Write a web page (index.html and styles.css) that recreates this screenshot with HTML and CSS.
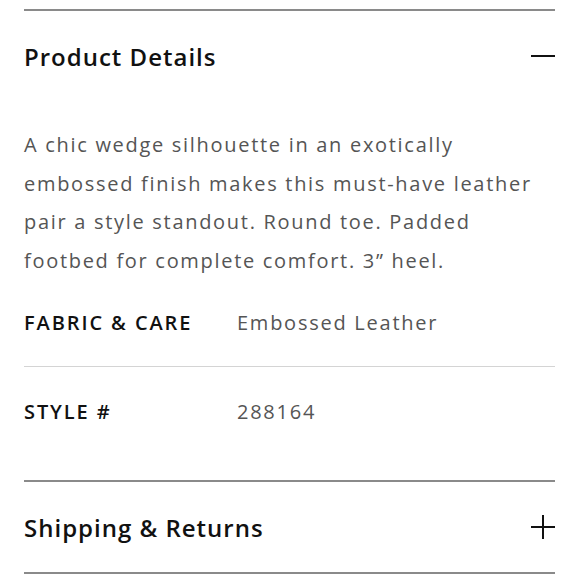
FILE: index.html
```html
<!DOCTYPE html>
<html>
<head>
<meta charset="utf-8">
<link rel="stylesheet" href="styles.css">
</head>
<body>
<div class="accordion">
  <section class="panel open">
    <div class="panel-head">
      <h2 class="panel-title">Product Details</h2>
      <svg class="icon" width="24" height="24" viewBox="0 0 24 24"><rect x="0" y="11" width="24" height="2" fill="#111"/></svg>
    </div>
    <div class="panel-body">
      <p class="desc">A chic wedge silhouette in an exotically embossed finish makes this must-have leather pair a style standout. Round toe. Padded footbed for complete comfort. 3” heel.</p>
      <div class="spec">
        <div class="spec-label">FABRIC &amp; CARE</div>
        <div class="spec-value">Embossed Leather</div>
      </div>
      <div class="spec last">
        <div class="spec-label">STYLE #</div>
        <div class="spec-value">288164</div>
      </div>
    </div>
  </section>
  <section class="panel">
    <div class="panel-head">
      <h2 class="panel-title">Shipping &amp; Returns</h2>
      <svg class="icon" width="24" height="24" viewBox="0 0 24 24"><rect x="0" y="11" width="24" height="2" fill="#111"/><rect x="11" y="0" width="2" height="24" fill="#111"/></svg>
    </div>
  </section>
</div>
</body>
</html>
```

FILE: styles.css
```css
* { box-sizing: border-box; }
html, body { margin: 0; padding: 0; background: #fff; }
body {
  font-family: "Open Sans", "Liberation Sans", sans-serif;
  color: #111;
  padding: 9px 24px 0 24px;
}
.accordion { width: 531px; }
.panel {
  border-top: 2px solid #8a8a8a;
}
.panel:last-child { border-bottom: 2px solid #8a8a8a; }
.panel-head {
  height: 90px;
  display: flex;
  align-items: center;
  justify-content: space-between;
}
.panel-title {
  margin: 0;
  font-size: 24px;
  font-weight: 600;
  letter-spacing: 1px;
  color: #111;
}
.icon { display: block; }
.panel-body { padding-top: 25px; }
.desc {
  margin: 0;
  font-size: 20px;
  line-height: 38.5px;
  letter-spacing: 1.7px;
  color: #555;
}
.spec {
  display: flex;
  align-items: center;
  padding: 31px 0;
  line-height: 24px;
  border-bottom: 1px solid #d4d4d4;
}
.spec.last {
  border-bottom: none;
  padding: 33px 0 56px;
}
.spec-label {
  width: 213px;
  font-size: 20px;
  font-weight: 600;
  letter-spacing: 1.9px;
  color: #111;
}
.spec-value {
  font-size: 20px;
  letter-spacing: 1.75px;
  color: #555;
}
```
